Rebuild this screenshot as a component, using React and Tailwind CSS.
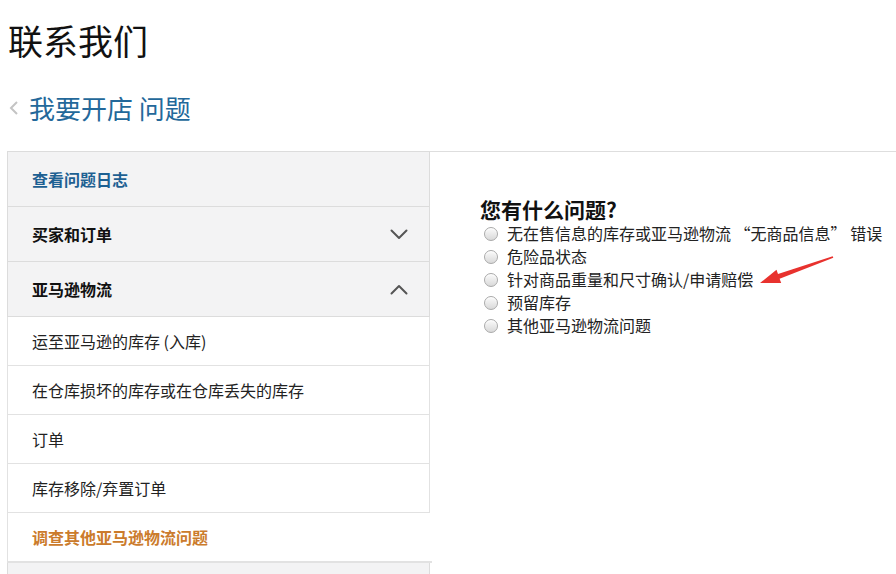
import React from "react";

const font = { fontFamily: '"Noto Sans CJK SC", "Noto Sans", sans-serif' };

function Chevron({ up }) {
  return (
    <svg width="18" height="11" viewBox="0 0 18 11" className="shrink-0">
      <polyline
        points={up ? "1.5,9.5 9,2 16.5,9.5" : "1.5,1.5 9,9 16.5,1.5"}
        fill="none"
        stroke="#555"
        strokeWidth="2"
        strokeLinecap="round"
        strokeLinejoin="round"
      />
    </svg>
  );
}

function Radio() {
  return (
    <span className="shrink-0 w-[14px] h-[14px] rounded-full border border-[#a9a9a9] bg-gradient-to-b from-[#fbfbfb] to-[#d9d9d9] shadow-[inset_0_1px_1px_rgba(255,255,255,0.9)]" />
  );
}

const subs = [
  "运至亚马逊的库存 (入库)",
  "在仓库损坏的库存或在仓库丢失的库存",
  "订单",
  "库存移除/弃置订单",
];

const options = [
  "无在售信息的库存或亚马逊物流 “无商品信息” 错误",
  "危险品状态",
  "针对商品重量和尺寸确认/申请赔偿",
  "预留库存",
  "其他亚马逊物流问题",
];

export default function App() {
  return (
    <div className="relative w-[896px] h-[574px] overflow-hidden bg-white" style={font}>
      <h1 className="pt-[19px] pl-2 text-[35px] leading-[42px] text-[#111] font-normal">联系我们</h1>
      <div className="mt-[31px] flex items-center h-[32px] pl-[9px]">
        <svg width="10" height="16" viewBox="0 0 10 16" className="mr-[10px]">
          <polyline points="8,2 2,8 8,14" fill="none" stroke="#c4c4c4" strokeWidth="2" />
        </svg>
        <span className="text-[26px] leading-[32px] text-[#23689a]">我要开店 问题</span>
      </div>

      <div className="mt-[27px] flex">
        <div className="ml-[7px] w-[423px] shrink-0 border-t border-[#dcdcdc]">
          <div className="h-[55px] flex items-center pl-6 bg-[#f3f3f4] border-x border-b border-[#dcdcdc]">
            <span className="text-[16px] font-bold text-[#1d6092]">查看问题日志</span>
          </div>
          <div className="h-[55px] flex items-center justify-between pl-6 pr-[21px] bg-[#f3f3f4] border-x border-b border-[#dcdcdc]">
            <span className="text-[16px] font-bold text-[#111]">买家和订单</span>
            <Chevron />
          </div>
          <div className="h-[55px] flex items-center justify-between pl-6 pr-[21px] bg-[#f3f3f4] border-x border-b border-[#dcdcdc]">
            <span className="text-[16px] font-bold text-[#111]">亚马逊物流</span>
            <Chevron up />
          </div>
          {subs.map((s) => (
            <div key={s} className="h-[49px] flex items-center pl-6 bg-white border-x border-b border-[#e2e2e2]">
              <span className="text-[16px] text-[#222]">{s}</span>
            </div>
          ))}
          <div className="h-[50px] -mr-[2px] flex items-center pl-6 bg-white border-l border-b-2 border-[#e2e2e2]">
            <span className="text-[16px] font-bold text-[#cb7b2c]">调查其他亚马逊物流问题</span>
          </div>
          <div className="h-[20px] bg-[#f3f3f4] border-x border-[#dcdcdc]" />
        </div>

        <div className="flex-1 border-t border-[#dedede] pt-[44px] pl-[50px]">
          <h2 className="text-[21px] leading-[26px] font-bold text-[#111]">您有什么问题?</h2>
          <ul>
            {options.map((o) => (
              <li key={o} className="flex items-center h-[23px] pl-1 gap-[9px]">
                <Radio />
                <span className="text-[16px] leading-[23px] text-[#222] whitespace-pre">{o}</span>
              </li>
            ))}
          </ul>
        </div>
      </div>

      <svg
        className="absolute left-[740px] top-[245px] w-[110px] h-[50px] pointer-events-none"
        viewBox="740 245 110 50"
      >
        <polygon
          points="760,283 776.5,269.7 778,273.9 832.7,256.2 833.3,257.8 779.6,278.7 781.2,282.9"
          fill="#e8322e"
        />
      </svg>
    </div>
  );
}
